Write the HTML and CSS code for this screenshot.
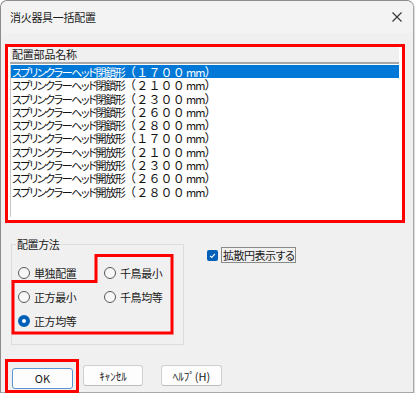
FILE: index.html
```html
<!DOCTYPE html>
<html lang="ja">

<head>
    <meta charset="UTF-8">
    <title>消火器具一括配置</title>
    <link rel="stylesheet" href="styles.css">
</head>

<body>
    <div class="win">
        <div class="titlebar">
            <span class="title">消火器具一括配置</span>
            <svg class="close" width="10" height="10" viewBox="0 0 10 10">
                <path d="M0.5 0.5 L9.5 9.5 M9.5 0.5 L0.5 9.5" stroke="#333" stroke-width="1.1" fill="none" />
            </svg>
        </div>

        <div class="mark list-mark">
            <div class="listbox">
                <div class="list-head">配置部品名称</div>
                <ul class="items" id="items"></ul>
            </div>
        </div>

        <div class="opts">
            <fieldset class="method">
                <legend>配置方法</legend>
                <div class="radios">
                    <label class="radio"><span class="dot"></span>単独配置</label>
                    <label class="radio"><span class="dot"></span>千鳥最小</label>
                    <label class="radio"><span class="dot"></span>正方最小</label>
                    <label class="radio"><span class="dot"></span>千鳥均等</label>
                    <label class="radio on"><span class="dot"></span>正方均等</label>
                </div>
            </fieldset>

            <label class="check">
                <span class="box">
                    <svg width="11" height="11" viewBox="0 0 11 11">
                        <path d="M3 5.8 L4.7 7.4 L8 3.8" stroke="#fff" stroke-width="1.1" fill="none" />
                    </svg>
                </span>
                <span class="focus">拡散円表示する</span>
            </label>
        </div>

        <div class="buttons">
            <div class="mark ok-mark">
                <button class="btn default">OK</button>
            </div>
            <button class="btn">ｷｬﾝｾﾙ</button>
            <button class="btn help">ﾍﾙﾌﾟ(H)</button>
        </div>

        <svg class="overlay" width="418" height="396">
            <polygon points="96,255.5 172,255.5 172,333 13,333 13,281.5 96,281.5" fill="none" stroke="#f00" stroke-width="3" />
        </svg>
    </div>

    <script>
        var parts = [
            ["閉鎖形", "１７００"],
            ["閉鎖形", "２１００"],
            ["閉鎖形", "２３００"],
            ["閉鎖形", "２６００"],
            ["閉鎖形", "２８００"],
            ["開放形", "１７００"],
            ["開放形", "２１００"],
            ["開放形", "２３００"],
            ["開放形", "２６００"],
            ["開放形", "２８００"]
        ];

        var rows = parts.map((p, index) => {
            var cls = index == 0 ? ' class="sel"' : '';
            return `<li${cls}><span class="nm">スプリンクラーヘッド${p[0]}</span><span class="sz">（${p[1]}<span class="mm">mm</span>）</span></li>`;
        });
        document.getElementById("items").innerHTML = rows.join("");
    </script>
</body>

</html>
```

FILE: styles.css
```css
body {
    margin: 0;
    background: #fff;
    font-family: "Noto Sans CJK JP", "Noto Sans", sans-serif;
    color: #1a1a1a;
}

.win {
    position: relative;
    width: 414px;
    height: 393px;
    box-sizing: border-box;
    background: #f0f0f0;
    border: 1px solid #8c8c8c;
    border-right-color: #a9a9a9;
    border-bottom-color: #a9a9a9;
    border-radius: 7px 7px 0 0;
    box-shadow: 1px 1px 1px rgba(0, 0, 0, 0.15);
}

.titlebar {
    height: 31px;
    display: flex;
    align-items: center;
    justify-content: space-between;
    padding: 0 8px 1px 9px;
    background: #f3f3f3;
    border-radius: 7px 7px 0 0;
}

.title {
    font-size: 11px;
    letter-spacing: -0.3px;
}

.close {
    margin-right: 3px;
}

.mark {
    border: 3px solid #f00;
}

.list-mark {
    margin: 11px 0 0 4px;
    width: 400px;
    height: 179px;
    box-sizing: border-box;
    background: #fff;
}

.listbox {
    height: 100%;
    padding: 0 3px 0 2px;
}

.list-head {
    height: 15px;
    line-height: 15px;
    padding-left: 2px;
    font-size: 11px;
    background: #f0f0f0;
    border-bottom: 2px solid #a8a8a8;
    letter-spacing: -0.2px;
}

.items {
    list-style-type: none;
    margin: 1px 0 0;
    padding: 0;
    height: 152px;
    border-left: 1px solid #c8c8c8;
}

.items li {
    height: 13.3px;
    line-height: 13.3px;
    font-size: 12px;
    padding-left: 1px;
    white-space: nowrap;
    color: #111;
}

.items li.sel {
    background: #0078d7;
    color: #fff;
}

.nm {
    display: inline-block;
    width: 112px;
    font-size: 11px;
    font-feature-settings: "palt";
    letter-spacing: -1.4px;
}

.sz {
    letter-spacing: 0.2px;
}

.mm {
    font-size: 11px;
    letter-spacing: -1px;
    margin-left: 1px;
}

.opts {
    display: flex;
    align-items: flex-start;
    margin-top: 15px;
}

.method {
    margin: 0 0 0 10px;
    width: 173px;
    min-inline-size: 0;
    height: 107px;
    box-sizing: border-box;
    padding: 11px 0 0 6px;
    border: 1px solid #dcdcdc;
}

.method legend {
    padding: 0 1px;
    margin-left: -2px;
    font-size: 11px;
    line-height: 12px;
    letter-spacing: -0.4px;
}

.radios {
    display: grid;
    grid-template-columns: 86px 78px;
    grid-auto-rows: 24px;
}

.radio {
    display: flex;
    align-items: center;
    gap: 4px;
    font-size: 11px;
    letter-spacing: -0.4px;
}

.dot {
    width: 10px;
    height: 10px;
    border: 1px solid #5a5a5a;
    border-radius: 50%;
    background: #f7f7f7;
}

.radio.on .dot {
    width: 4px;
    height: 4px;
    border: 4px solid #005fb8;
    background: #fff;
}

.check {
    display: flex;
    align-items: center;
    gap: 3px;
    margin: 9px 0 0 23px;
    font-size: 11px;
}

.box {
    width: 11px;
    height: 11px;
    border-radius: 2px;
    background: #005fb8;
    display: flex;
}

.focus {
    border: 1px solid #8a8a8a;
    padding: 0 1px;
    line-height: 14px;
    letter-spacing: -0.5px;
    font-feature-settings: "palt";
}

.buttons {
    display: flex;
    align-items: center;
    margin: 14px 0 0 4px;
}

.ok-mark {
    padding: 2px 3px 1px 4px;
}

.btn {
    width: 61px;
    height: 21px;
    margin-right: 4px;
    padding: 0;
    font-family: "Noto Sans CJK JP", "Noto Sans", sans-serif;
    font-size: 11px;
    color: #1a1a1a;
    background: #fdfdfd;
    border: 1px solid #d0d0d0;
    border-bottom-color: #bcbcbc;
    border-radius: 3px;
}

.ok-mark .btn {
    margin-right: 0;
}

.buttons > .btn:first-of-type {
    margin-left: 4px;
    width: 60px;
}

.btn.default {
    border-color: #5b95d6;
}

.btn.help {
    margin-left: 14px;
}

.overlay {
    position: absolute;
    left: -1px;
    top: -1px;
    pointer-events: none;
}
```
